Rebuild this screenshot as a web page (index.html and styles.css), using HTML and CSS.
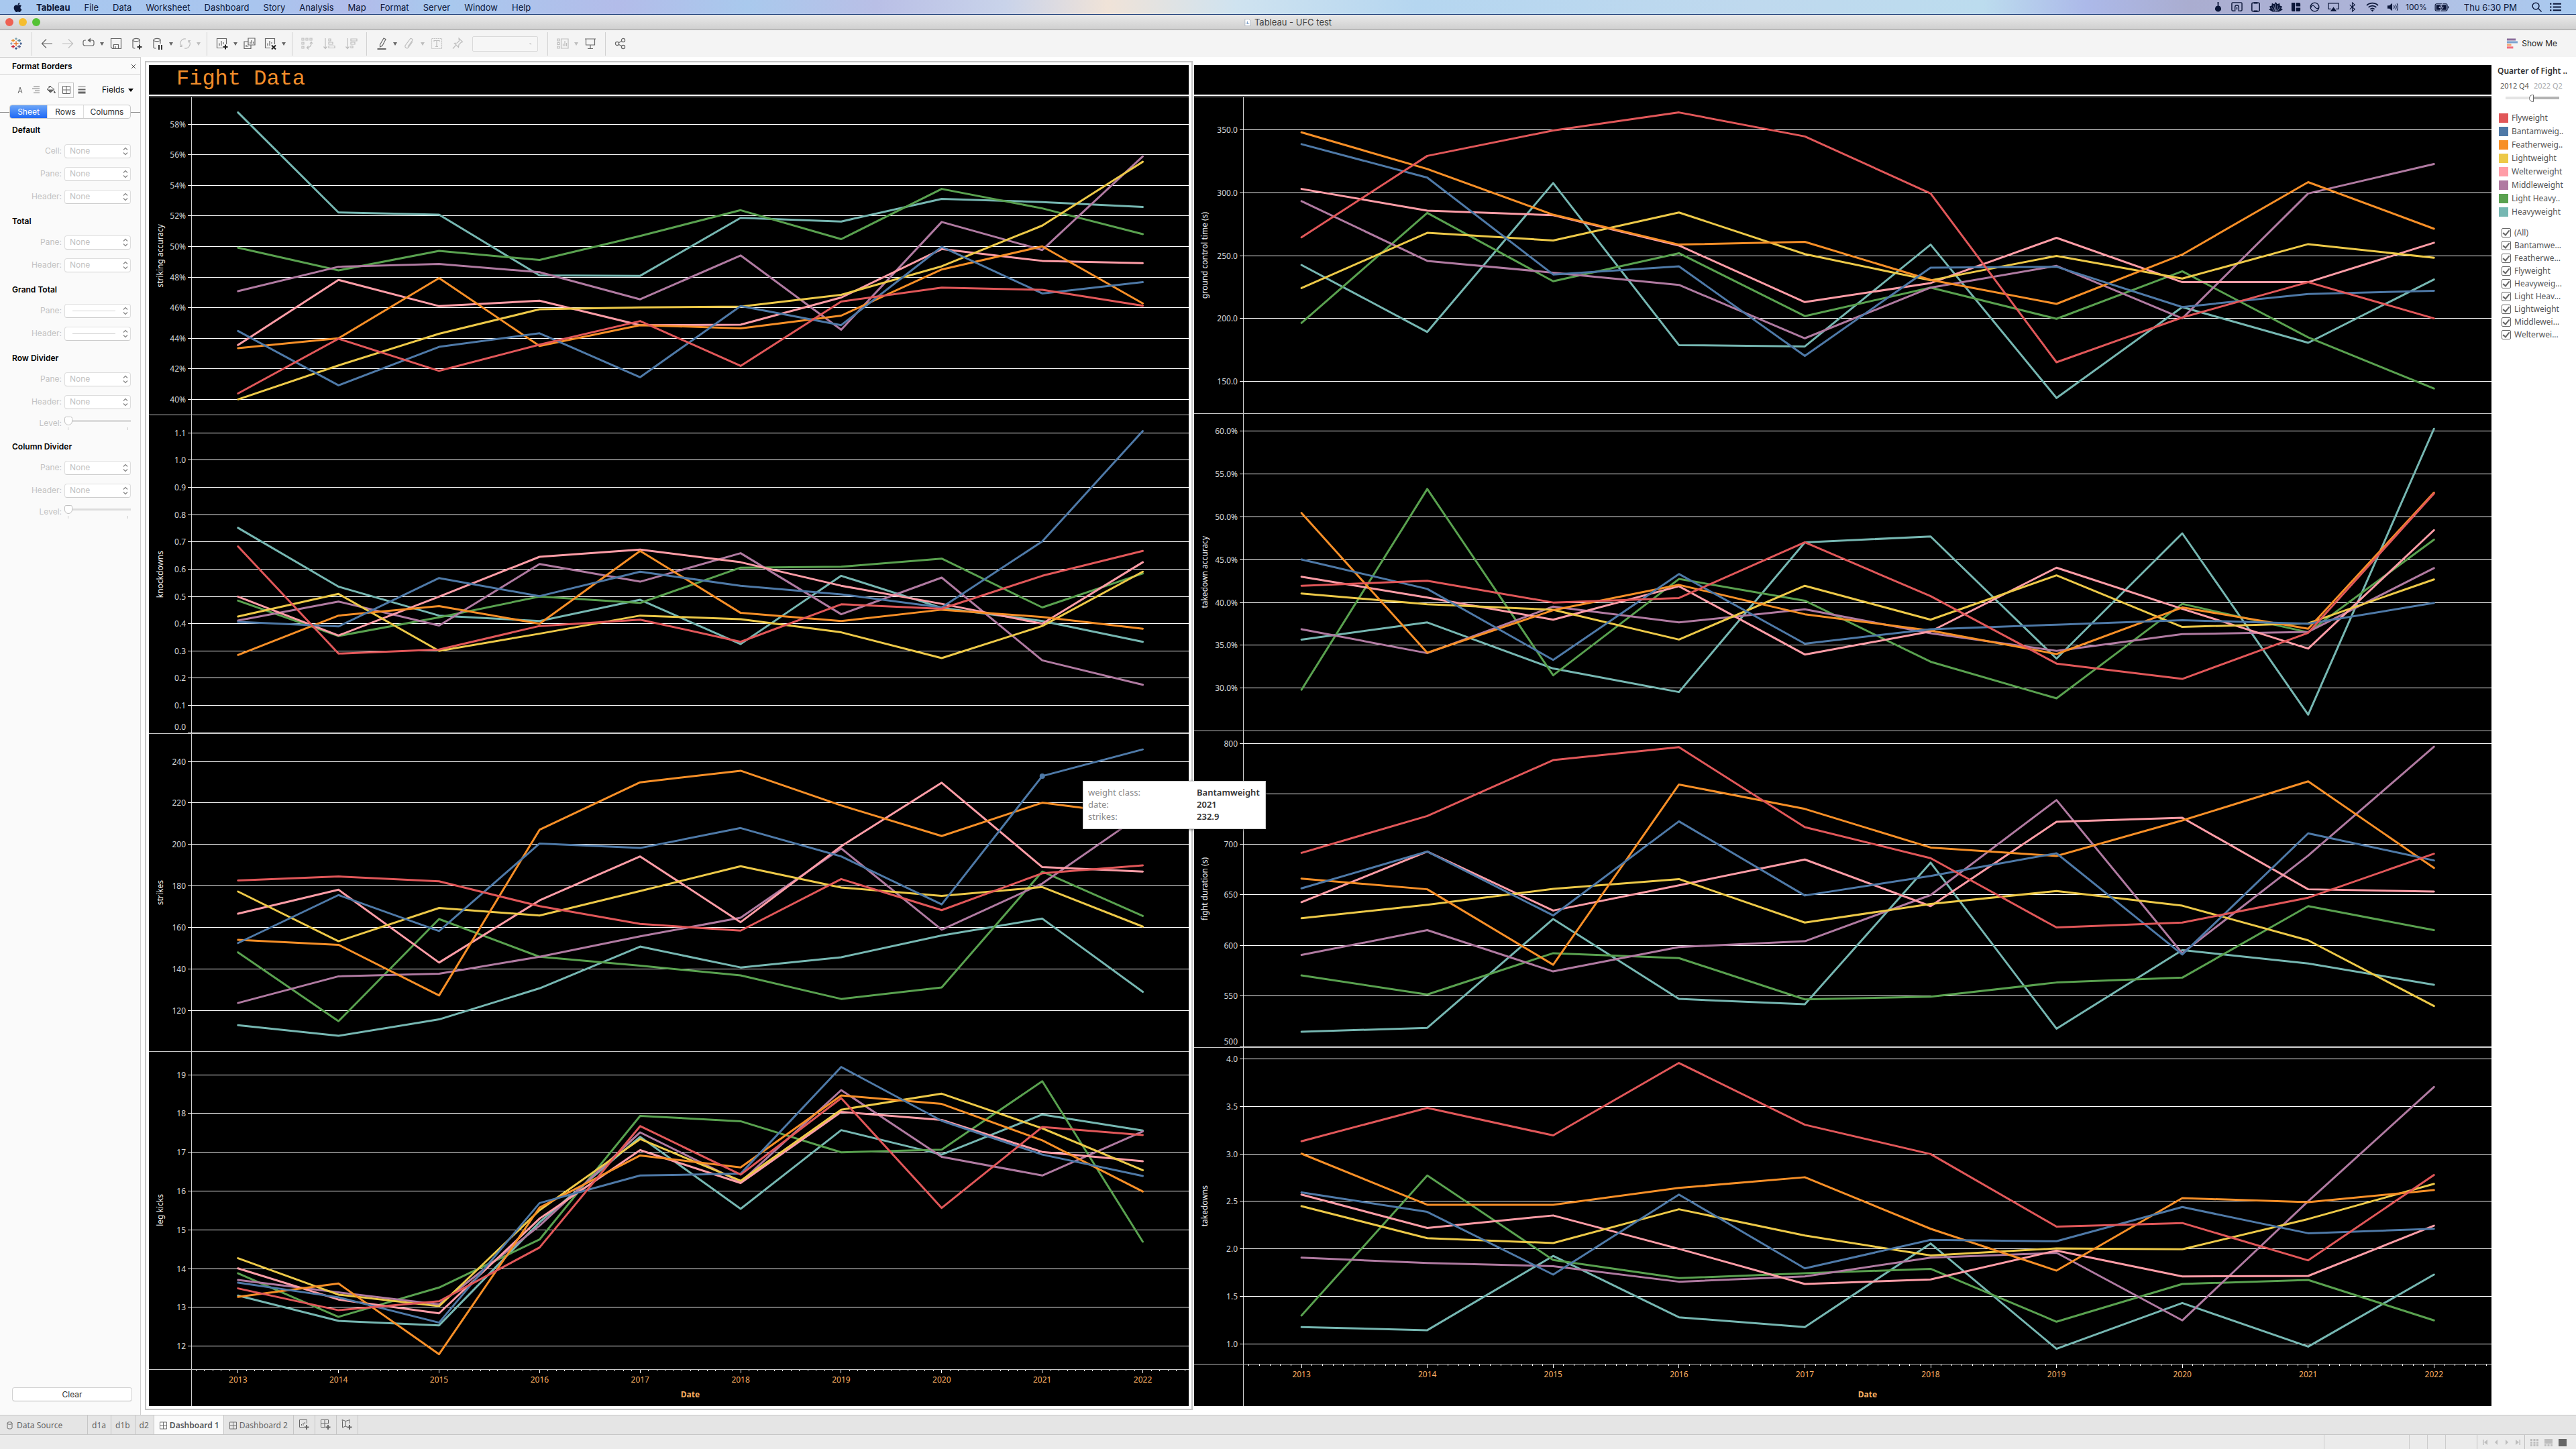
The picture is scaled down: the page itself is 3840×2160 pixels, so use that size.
FILE: index.html
```html
<!DOCTYPE html>
<html lang="en">
<head>
<meta charset="utf-8">
<title>Tableau - UFC test</title>
<link rel="stylesheet" href="styles.css">
</head>
<body>
<header class="menubar">
  <nav class="menus" aria-label="Application menu">
    <button class="apple" aria-label="Apple"><svg viewBox="0 0 384 512" width="13" height="16"><path fill="currentColor" d="M318.7 268.7c-.2-36.7 16.4-64.4 50-84.8-18.8-26.9-47.2-41.7-84.7-44.6-35.5-2.8-74.3 20.7-88.5 20.7-15 0-49.4-19.7-76.4-19.7C63.3 141.2 4 184.8 4 273.5q0 39.3 14.4 81.2c12.8 36.7 59 126.7 107.2 125.2 25.2-.6 43-17.9 75.8-17.9 31.8 0 48.3 17.9 76.4 17.9 48.6-.7 90.4-82.5 102.6-119.3-65.2-30.7-61.7-90-61.7-91.9zm-56.6-164.2c27.3-32.4 24.8-61.9 24-72.5-24.1 1.4-52 16.4-67.9 34.9-17.5 19.8-27.8 44.3-25.6 71.9 26.1 2 49.9-11.4 69.5-34.3z"/></svg></button>
    <button class="app">Tableau</button><button>File</button><button>Data</button><button>Worksheet</button><button>Dashboard</button><button>Story</button><button>Analysis</button><button>Map</button><button>Format</button><button>Server</button><button>Window</button><button>Help</button>
  </nav>
  <div class="tray">
    <svg viewBox="0 0 18 18"><path fill="currentColor" d="M8 1h2v2.500L9.800 7a4.800 4.800 0 1 1-1.600 0L8 3.500z"/></svg>
    <svg viewBox="0 0 18 18" fill="none" stroke="currentColor" stroke-width="1.500"><path d="M5 15H2.500A1.500 1.500 0 0 1 1 13.500v-10A1.500 1.500 0 0 1 2.500 2h13A1.500 1.500 0 0 1 17 3.500v10a1.500 1.500 0 0 1-1.500 1.500H13M6 16V9a3 3 0 0 1 6 0v7M9 9v4"/></svg>
    <svg viewBox="0 0 18 18" fill="none" stroke="currentColor" stroke-width="1.600"><rect x="3" y="2.500" width="12" height="13" rx="1.500"/><path d="M6 2.500h6M6 15.500h6" stroke-width="2.500"/></svg>
    <svg viewBox="0 0 22 18" class="wide"><path fill="currentColor" d="M11 1l2.500 3.500L17 3l.5 4L21 8l-1.500 3.500L22 13l-6 3.500H6L0 13l2.500-1.500L1 8l3.500-1L5 3l3.500 1.500z"/><path d="M11 4v12M7.500 6.500L10 15M14.500 6.500L12 15M4 9.500l4.500 6M18 9.500L13.500 15.500" stroke="#aeb4d4" stroke-width=".7"/></svg>
    <svg viewBox="0 0 18 18"><path fill="currentColor" d="M2 2h5.500v14H4a2 2 0 0 1-2-2zM9 2h5a2 2 0 0 1 2 2v4H9zM9 10h7v4a2 2 0 0 1-2 2H9z"/></svg>
    <svg viewBox="0 0 18 18" fill="none" stroke="currentColor" stroke-width="1.300"><circle cx="9" cy="9" r="6.800"/><path d="M2.500 11C4 6 6 5 8.500 8s4 4.500 7 2"/></svg>
    <svg viewBox="0 0 18 18"><path d="M5 12H1V3h16v9h-4" fill="none" stroke="currentColor" stroke-width="1.300"/><path fill="currentColor" d="M9 9l5 6.500H4z"/></svg>
    <svg viewBox="0 0 18 18" fill="none" stroke="currentColor" stroke-width="1.200"><path d="M5 5.500l8 7L9 16V2l4 3.500-8 7"/></svg>
    <svg viewBox="0 0 20 18" class="wide" fill="none" stroke="currentColor" stroke-width="1.900"><path d="M1 6.500a13 13 0 0 1 18 0M3.800 9.500a9 9 0 0 1 12.400 0M6.700 12.400a5 5 0 0 1 6.600 0"/><path fill="currentColor" stroke="none" d="M8 14a3 3 0 0 1 4 0l-2 2.500z"/></svg>
    <svg viewBox="0 0 18 18"><path fill="currentColor" d="M1 6.500h3L8.500 3v12L4 11.500H1z"/><path d="M11 6.500c1 1.500 1 3.500 0 5M13.500 5c1.800 2.500 1.800 5.500 0 8M16 3.500c2 3.500 2 7.500 0 11" fill="none" stroke="currentColor" stroke-width="1.100"/></svg>
    <span class="charge">100%</span>
    <svg viewBox="0 0 24 18" class="batt"><rect x="1" y="4" width="19" height="11" rx="2" fill="none" stroke="currentColor" stroke-width="1.200"/><path fill="currentColor" d="M2.500 5.500H18.500v8H2.500zM21 7.500c2 .3 2 3.700 0 4z"/><path d="M12.500 3L7 10h3.500L8.500 16 14 9h-3.500z" fill="#0b1638" stroke="#b2bddf" stroke-width="1"/></svg>
    <time class="clock">Thu 6:30 PM</time>
    <svg viewBox="0 0 18 18" fill="none" stroke="currentColor" stroke-width="1.500"><circle cx="7.500" cy="7.500" r="5.200"/><path d="M11.500 11.500l5 5"/></svg>
    <svg viewBox="0 0 18 18" fill="currentColor"><path d="M0 3h2.500v2H0zM5 3h13v2H5zM0 8h2.500v2H0zM5 8h13v2H5zM0 13h2.500v2H0zM5 13h13v2H5z"/></svg>
  </div>
</header>

<div class="titlebar">
  <div class="lights"><button class="close" aria-label="Close"></button><button class="mini" aria-label="Minimize"></button><button class="zoom" aria-label="Zoom"></button></div>
  <h1><svg viewBox="0 0 12 14" width="10" height="13"><path d="M1 1h7l3 3v9H1z" fill="#fff" stroke="#a9b2bd"/><path d="M3 10V7M5.500 10V5M8 10V8" stroke="#5b86b8"/></svg>Tableau - UFC test</h1>
</div>

<div class="toolbar">
  <button class="logo" aria-label="Start page"><svg viewBox="0 0 18 18" fill="none" stroke-width="1.500"><path stroke="#e8762d" d="M9 5.500v7M5.500 9h7"/><path stroke="#c72037" d="M4.500 11v5M2 13.500h5"/><path stroke="#5b6591" d="M13.500 11v5M11 13.500h5"/><path stroke="#eb912c" d="M4.500 2v5M2 4.500h5"/><path stroke="#59879b" d="M13.500 2v5M11 4.500h5"/><path stroke="#7199a6" stroke-width="1.200" d="M9 0v3.500M7.200 1.800h3.600"/><path stroke="#1f447e" stroke-width="1.200" d="M9 14.500V18M7.200 16.200h3.600M16 7.200v3.600M14.500 9h3.500"/><path stroke="#7b94b5" stroke-width="1.200" d="M2 7.200v3.600M0 9h3.500"/></svg></button>
  <i class="sep"></i>
  <button aria-label="Undo"><svg viewBox="0 0 18 18" stroke-width="2"><path d="M17 9H2M8 2.500L1.500 9 8 15.500"/></svg></button>
  <button class="dim" aria-label="Redo"><svg viewBox="0 0 18 18" stroke-width="1.600"><path d="M1 9h15M10 2.500L16.500 9 10 15.500"/></svg></button>
  <button aria-label="Replay"><svg viewBox="0 0 18 18"><path d="M5 4H3.500A2.500 2.500 0 0 0 1 6.500v3A2.500 2.500 0 0 0 3.500 12h11A2.500 2.500 0 0 0 17 9.500v-3A2.500 2.500 0 0 0 14.500 4H8"/><path fill="currentColor" stroke="none" d="M12 .5v7L7.500 4z"/></svg></button><button class="caret" aria-label="Replay options"></button>
  <button aria-label="Save"><svg viewBox="0 0 18 18"><path d="M1.500 1.500h15v15h-13l-2-2zM5.500 16v-5.500h7V16M8 13v3"/></svg></button>
  <button aria-label="New data source"><svg viewBox="0 0 18 18"><path d="M3 3.500v11c0 1 1.500 1.500 3.500 1.500M13 3.500V9"/><ellipse cx="8" cy="3.500" rx="5" ry="2.200"/><path stroke="#333" stroke-width="2" d="M13 10.500v7M9.500 14h7"/></svg></button>
  <button aria-label="Pause updates"><svg viewBox="0 0 18 18"><path d="M3 3.500v11c0 1 1.500 1.500 3.500 1.500M13 3.500V9"/><ellipse cx="8" cy="3.500" rx="5" ry="2.200"/><path stroke="#333" stroke-width="2" d="M11 11v7M15 11v7"/></svg></button><button class="caret" aria-label="Pause options"></button>
  <button class="dim" aria-label="Refresh"><svg viewBox="0 0 18 18"><path d="M3.500 13.500A7 7 0 0 1 10 2M14.500 4.500A7 7 0 0 1 8 16M1 13.500h3v-3M17 4.500h-3v3"/></svg></button><button class="caret dim" aria-label="Refresh options"></button>
  <i class="sep"></i>
  <button aria-label="New worksheet"><svg viewBox="0 0 18 18"><path d="M10 15.500H1.500v-14h14V10M5 12V8.500M8 12V5M11 10V7"/><path stroke="#222" stroke-width="2" d="M14 10.500v7M10.500 14h7"/></svg></button><button class="caret" aria-label="New worksheet options"></button>
  <button aria-label="Duplicate"><svg viewBox="0 0 18 18"><path d="M7 1h10v10H7zM7 6H1v10.500h10V11M10 9V6.500M12 9V4M14.500 9V6M4 14v-3M6.500 14v-2"/></svg></button>
  <button aria-label="Clear sheet"><svg viewBox="0 0 18 18"><path d="M9 15.500H1.500v-14h14V10M5 12V8.500M8 12V5M11 9V7"/><path stroke="#222" stroke-width="2" d="M11 11.500l6 6M17 11.500l-6 6"/></svg></button><button class="caret" aria-label="Clear options"></button>
  <i class="sep"></i>
  <div class="group">
  <button class="dim" aria-label="Swap"><svg viewBox="0 0 18 18"><path d="M1 1h3v3H1zM7 1h3v3H7zM13 1h3v3h-3zM1 7h3v3H1zM1 13h3v3H1zM15 7.500c.5 5-2.500 7.500-6 7.500M13 9l2-2.500L17 9M11 12.500L8.500 15l2.500 2.500"/></svg></button>
  <button class="dim" aria-label="Sort ascending"><svg viewBox="0 0 18 18"><path d="M3 1v15M.5 13.500L3 16.500l2.500-3M8 2h3v3H8zM8 7h6v3H8zM8 12.500h9v3H8z"/></svg></button>
  <button class="dim" aria-label="Sort descending"><svg viewBox="0 0 18 18"><path d="M3 1v15M.5 13.500L3 16.500l2.500-3M8 2h9v3H8zM8 7h6v3H8zM8 12.500h3v3H8z"/></svg></button>
  </div>
  <i class="sep"></i>
  <button aria-label="Highlight"><svg viewBox="0 0 18 18"><path d="M6.500 10.500L12 1l3 1.500L10 12l-3.500 2z"/><path stroke-width="2" d="M2.500 17h13"/></svg></button><button class="caret" aria-label="Highlight options"></button>
  <button class="dim" aria-label="Group"><svg viewBox="0 0 18 18"><path d="M14 6l-6.500 9a2.800 2.800 0 0 1-4.500-3L10 2.500a2 2 0 0 1 3.500 2L7 13.500"/></svg></button><button class="caret dim" aria-label="Group options"></button>
  <button class="dim" aria-label="Show labels"><svg viewBox="0 0 18 18"><path stroke-dasharray="2 1" d="M1.500 1.500h15v15h-15z"/><path d="M5 6V4.500h8V6M9 4.500v9M7 13.500h4"/></svg></button>
  <button class="dim" aria-label="Fix axes"><svg viewBox="0 0 18 18"><path d="M11 1l5.500 5.500-2.500 1-3 3-.5 4-6-6 4-.5 3-3zM6.500 11.500L2 16.500"/></svg></button>
  <select class="fit" aria-label="Fit" disabled><option></option></select>
  <i class="sep"></i>
  <button class="dim" aria-label="Show cards"><svg viewBox="0 0 18 18"><path d="M1 2h3v3H1zM1 7.500h3v3H1zM1 13h3v3H1zM6.500 2H17v14H6.500zM9.500 13V9M12 13V5M14.500 13V8"/></svg></button><button class="caret dim" aria-label="Card options"></button>
  <button aria-label="Presentation mode"><svg viewBox="0 0 18 18"><path d="M1 2h16M2.500 2v9h13V2M9 11v5.500M5 16.500h8"/></svg></button>
  <i class="sep"></i>
  <button aria-label="Share"><svg viewBox="0 0 18 18"><circle cx="4" cy="9" r="2.600"/><circle cx="13" cy="4" r="2.600"/><circle cx="13" cy="14" r="2.600"/><path d="M6.300 7.800l4.400-2.500M6.300 10.200l4.400 2.500"/></svg></button>
  <button class="showme"><svg viewBox="0 0 18 16"><path fill="#8a6d9b" d="M1 0h14v3.200H1z"/><path fill="#7ba3d0" d="M1 4.200h17v3.200H1z"/><path fill="#f5a773" d="M1 8.400h7v3.200H1z"/><path fill="#f26d7d" d="M1 12.600h10v3.200H1z"/></svg>Show Me</button>
</div>

<main class="workspace">
  <aside class="format">
    <div class="format-head"><h2>Format Borders</h2><button aria-label="Close pane"><svg viewBox="0 0 10 10" width="8" height="8"><path d="M1 1l8 8M9 1l-8 8" stroke="#555" stroke-width="1.200"/></svg></button></div>
    <div class="format-kinds">
      <button aria-label="Font"><svg viewBox="0 0 16 16"><path d="M5 13L8 4l3 9M6 10h4"/></svg></button>
      <button aria-label="Alignment"><svg viewBox="0 0 16 16"><path d="M5 3.500h9M3 6.500h11M7 9.500h7M5 12.500h9"/></svg></button>
      <button aria-label="Shading"><svg viewBox="0 0 16 16"><path d="M2 7l5-4 6 4-6 5z"/><path fill="#666" d="M3 8h9l-5 4zM13 9.500l1.500 3h-2z"/><path d="M5 5V2.500h3"/></svg></button>
      <button class="on" aria-label="Borders"><svg viewBox="0 0 16 16"><path d="M2.500 2.500h11v11h-11zM8 2.500v11M2.500 8h11"/></svg></button>
      <button aria-label="Lines"><svg viewBox="0 0 16 16"><path stroke-width="1" d="M2.500 3.500h11"/><path stroke-width="2" d="M2.500 7.500h11"/><path stroke-width="3" d="M2.500 12h11"/></svg></button>
      <button class="fields">Fields<i></i></button>
    </div>
    <div class="scope"><div class="segments"><button class="on">Sheet</button><button>Rows</button><button>Columns</button></div></div>
    <form class="borders" id="borders"></form>
    <button class="clear">Clear</button>
  </aside>

  <section class="canvas">
    <div class="frame">
      <article class="sheet left">
        <h2>Fight Data</h2>
        <div class="chart" id="chart-left"></div>
      </article>
    </div>
    <article class="sheet right">
      <h2></h2>
      <div class="chart" id="chart-right"></div>
    </article>
    <dl class="tooltip" role="tooltip">
      <dt>weight class:</dt><dd>Bantamweight</dd>
      <dt>date:</dt><dd>2021</dd>
      <dt>strikes:</dt><dd>232.9</dd>
    </dl>
  </section>

  <aside class="filters">
    <h3><label for="quarter">Quarter of Fight ..</label></h3>
    <div class="range"><span>2012 Q4</span><span>2022 Q2</span></div>
    <input type="range" id="quarter" min="0" max="100" value="48">
    <ul class="legend">
      <li><i class="fly"></i>Flyweight</li>
      <li><i class="bantam"></i>Bantamweig..</li>
      <li><i class="feather"></i>Featherweig..</li>
      <li><i class="light"></i>Lightweight</li>
      <li><i class="welter"></i>Welterweight</li>
      <li><i class="middle"></i>Middleweight</li>
      <li><i class="lightheavy"></i>Light Heavy..</li>
      <li><i class="heavy"></i>Heavyweight</li>
    </ul>
    <div class="checks">
      <label><input type="checkbox" checked>(All)</label>
      <label><input type="checkbox" checked>Bantamwe...</label>
      <label><input type="checkbox" checked>Featherwe...</label>
      <label><input type="checkbox" checked>Flyweight</label>
      <label><input type="checkbox" checked>Heavyweig...</label>
      <label><input type="checkbox" checked>Light Heav...</label>
      <label><input type="checkbox" checked>Lightweight</label>
      <label><input type="checkbox" checked>Middlewei...</label>
      <label><input type="checkbox" checked>Welterwei...</label>
    </div>
  </aside>
</main>

<nav class="tabs" aria-label="Sheets">
  <button class="source"><svg viewBox="0 0 9 12" class="cyl"><path d="M1 2.500v7c0 2 7 2 7 0v-7"/><ellipse cx="4.500" cy="2.500" rx="3.500" ry="1.800"/></svg>Data Source</button>
  <button>d1a</button><button>d1b</button><button>d2</button>
  <button class="dash on"><svg viewBox="0 0 12 12"><path d="M.5.5h11v11H.5zM6 .5v11M.5 6h11"/></svg>Dashboard 1</button>
  <button class="dash"><svg viewBox="0 0 12 12"><path d="M.5.5h11v11H.5zM6 .5v11M.5 6h11"/></svg>Dashboard 2</button>
  <button class="new" aria-label="New worksheet"><svg viewBox="0 0 16 16"><path d="M8 11.500H1.500v-11h11V6M4.500 9V7M7 9V5M9.500 7V4"/><path stroke-width="2" d="M12 8v7M8.500 11.500h7"/></svg></button>
  <button class="new" aria-label="New dashboard"><svg viewBox="0 0 16 16"><path d="M8 11.500H1.500v-11h11V6M7 .5v11M1.500 6h11"/><path stroke-width="2" d="M12 8v7M8.500 11.500h7"/></svg></button>
  <button class="new" aria-label="New story"><svg viewBox="0 0 16 16"><path d="M8 11L6 10l-4.500 2V2.500L1 .5l5.500 2L12.500.5V6M6.500 2.500V10"/><path stroke-width="2" d="M12 8v7M8.500 11.500h7"/></svg></button>
</nav>
<footer class="status">
  <span class="w1"></span><span class="w2"></span><span class="w2"></span><span class="w3"></span>
  <div class="pager">
    <button aria-label="First"><svg viewBox="0 0 10 10"><path d="M1 1h1.500v8H1zM8 1v8L3 5z"/></svg></button>
    <button aria-label="Previous"><svg viewBox="0 0 10 10"><path d="M7 1v8L3 5z"/></svg></button>
    <button aria-label="Next"><svg viewBox="0 0 10 10"><path d="M3 1v8l4-4z"/></svg></button>
    <button aria-label="Last"><svg viewBox="0 0 10 10"><path d="M7.500 1H9v8H7.500zM2 1v8l5-4z"/></svg></button>
  </div>
  <div class="views">
    <button aria-label="Sheet sorter"><svg viewBox="0 0 12 12"><path d="M0 1h3v3H0zM4.500 1h3v3h-3zM9 1h3v3H9zM0 5h3v3H0zM4.500 5h3v3h-3zM9 5h3v3H9zM0 9h3v3H0zM4.500 9h3v3h-3zM9 9h3v3H9z"/></svg></button>
    <button aria-label="Filmstrip"><svg viewBox="0 0 12 12"><path d="M0 1h12v7H0zM0 9h3v3H0zM4.500 9h3v3h-3zM9 9h3v3H9z"/></svg></button>
    <button class="on" aria-label="Tabs"><svg viewBox="0 0 12 12"><path d="M0 1h12v11H0z"/></svg></button>
  </div>
</footer>
<script src="charts.js"></script>
</body>
</html>
```
FILE: styles.css
```css
* { box-sizing: border-box; }
body, h1, h2, h3, ul, dl, dd { margin: 0; padding: 0; }
body {
  display: flex;
  flex-direction: column;
  min-height: 100vh;
  font: 12px/16px "Noto Sans", "Open Sans", sans-serif;
  color: #333;
  background: #fff;
}
button { margin: 0; padding: 0; border: 0; background: none; color: inherit; font: inherit; }
svg { display: block; flex: none; }
ul { list-style: none; }

/* system menu bar */
.menubar {
  display: flex;
  justify-content: space-between;
  align-items: center;
  height: 22px;
  padding: 0 22px 0 20px;
  font: 13px/20px Inter, Roboto, sans-serif;
  color: #0b1638;
  border-bottom: 1px solid #23437c;
  background: linear-gradient(90deg, #a8c8ef 0, #a9c5ee 10%, #b2bcea 14%, #a8c9ee 17%, #b3bce9 24%, #a9c9ed 29%, #b9bfe6 34%, #c9d3ea 39%, #f0e3d8 43%, #cfe3f0 48%, #b5d6f0 55%, #bfd9ee 68%, #bcdcee 77%, #acb9e9 81%, #aaadd0 85%, #adb4d8 92%, #b0c2e6 95%, #a9caf0 100%);
}
.menus { display: flex; align-items: center; gap: 21px; }
.menus .app { font-weight: 700; }
.tray { display: flex; align-items: center; gap: 11px; }
.tray svg { width: 17px; height: 17px; }
.tray .wide { width: 21px; }
.tray .batt { width: 23px; }
.tray .charge { font-size: 12px; }
.tray .clock { margin: 0 10px; }

.titlebar {
  position: relative;
  display: flex;
  align-items: center;
  justify-content: center;
  height: 23px;
  background: linear-gradient(#e9e9e9, #cfcfcf);
  border-bottom: 1px solid #9f9f9f;
}
.titlebar h1 { display: flex; align-items: center; gap: 5px; font: 13px/20px Inter, sans-serif; color: #444; }
.lights { position: absolute; left: 8px; display: flex; gap: 8px; }
.lights button { width: 12px; height: 12px; border-radius: 50%; }
.close { background: #ee6152; }
.mini { background: #f5bd2f; }
.zoom { background: #55c234; }

.toolbar { display: flex; align-items: center; height: 40px; background: #f4f4f4; color: #666; }
.toolbar button { width: 31px; height: 28px; display: flex; align-items: center; justify-content: center; }
.toolbar svg { width: 18px; height: 18px; fill: none; stroke: currentColor; stroke-width: 1.2; }
.toolbar .logo { width: 47px; }
.toolbar .logo svg { stroke: none; stroke-width: 1.5; }
.toolbar .dim { color: #bdbdbd; }
.toolbar .caret { width: 10px; }
.caret::before { content: ""; border: 3px solid transparent; border-top: 5px solid currentColor; border-bottom: 0; }
.sep { width: 1px; height: 35px; margin: 0 6px 0 7px; background: #d2d2d2; }
.toolbar .logo + .sep { margin-left: 0; }
.group { display: flex; gap: 2px; }
.fit {
  appearance: none;
  width: 98px;
  height: 23px;
  margin: 0 7px;
  border: 1px solid #d0d0d0;
  border-radius: 2px;
  background: linear-gradient(45deg, transparent 50%, #ccc 50%) no-repeat 84px 9px / 3px 5px, #f8f8f8;
}
.toolbar .showme { width: auto; gap: 6px; margin-left: auto; margin-right: 28px; font: 12px/16px Inter, sans-serif; color: #222; }
.toolbar .showme svg { width: 17px; height: 16px; stroke: none; }

.workspace { flex: 1; display: flex; min-height: 0; }

/* format pane */
.format {
  display: flex;
  flex-direction: column;
  width: 210px;
  border: 1px solid #d0d0d0;
  border-width: 1px 1px 0 0;
  background: #fafafa;
  font: 12px/16px Inter, sans-serif;
  color: #333;
}
.format-head { display: flex; justify-content: space-between; align-items: center; height: 26px; padding: 0 6px 0 18px; border-bottom: 1px solid #d5d5d5; }
.format h2, .format legend { font-size: 12px; line-height: 16px; font-weight: 600; color: #000; }
.format-kinds { display: flex; align-items: center; height: 44px; padding-left: 18px; }
.format-kinds button { display: grid; place-items: center; width: 23px; height: 23px; }
.format-kinds .on { border: 1px solid #c4c4c4; }
.format-kinds svg { width: 16px; height: 16px; fill: none; stroke: #666; stroke-width: 1; }
.format-kinds .fields { display: flex; align-items: center; gap: 5px; width: auto; margin-left: 19px; color: #000; }
.fields i { border: 4px solid transparent; border-top: 5px solid #000; border-bottom: 0; }
.scope { display: flex; align-items: center; height: 21px; padding: 0 14px; background: linear-gradient(#8f8f8f, #8f8f8f) no-repeat 0 11px / 100% 1px; }
.segments { display: grid; grid-template-columns: 55px 54px 1fr; width: 100%; height: 21px; border: 1px solid #c9c9c9; border-radius: 4px; background: #fff; overflow: hidden; }
.segments button + button { border-left: 1px solid #ddd; }
.segments .on { color: #fff; background: linear-gradient(#6ba5f8, #2069f5); }
.borders { padding-top: 3px; }
.borders fieldset { margin: 0 0 6px; padding: 0; border: 0; min-width: 0; }
.borders legend { height: 28px; padding: 6px 0 6px 18px; }
.row { display: grid; grid-template-columns: 92px 99px; column-gap: 4px; align-items: center; height: 34px; color: #c2c2c2; }
.row > label { text-align: right; }
.row.level { height: 30px; }
.pick { position: relative; display: block; }
.pick select {
  appearance: none;
  width: 100%;
  height: 21px;
  padding: 0 7px;
  border: 1px solid #dedede;
  border-bottom-color: #cdcdcd;
  border-radius: 4px;
  background: #fff;
  color: #c2c2c2;
  font: inherit;
  opacity: 1;
}
.pick svg { position: absolute; right: 4px; top: 4px; width: 8px; height: 13px; fill: none; stroke: #8e8e8e; stroke-width: 1.4; }
.pick hr { position: absolute; left: 12px; top: 10px; width: 64px; margin: 0; border: 0; border-top: 1px solid #d4d4d4; }
.row input { appearance: none; width: 99px; height: 20px; margin: 0; background: linear-gradient(#dcdcdc, #dcdcdc) no-repeat 0 5px / 100% 3px, linear-gradient(#ccc, #ccc) no-repeat 5px 16px / 1px 4px, linear-gradient(#ccc, #ccc) no-repeat 94px 16px / 1px 4px; }
.row input::-webkit-slider-thumb { appearance: none; width: 12px; height: 13px; margin-top: -7px; background: #fff; border: 1px solid #c0c0c0; border-radius: 3px 3px 7px 7px; }
.clear { width: 179px; height: 21px; margin: auto 0 20px 18px; background: #fff; border: 1px solid #d2d2d2; border-bottom-color: #b5b5b5; border-radius: 4px; }

/* dashboard */
.canvas { position: relative; flex: 1; display: grid; grid-template-columns: 1562fr 1934fr; column-gap: 2px; padding: 6px 0 7px 6px; min-width: 0; }
.frame { display: flex; padding: 4px; border: 2px solid #c4c4c4; min-width: 0; }
.sheet { flex: 1; display: flex; flex-direction: column; background: #000; min-width: 0; }
.sheet.right { margin: 6px 0; }
.sheet h2 { height: 46px; padding-left: 41px; border-bottom: 2px solid #fff; color: #f28e2b; font: 32px/42px "Liberation Mono", monospace; }
.chart { flex: 1; display: flex; flex-direction: column; margin-top: 1px; border-top: 1px solid #d0d0d0; color: #d6d6d6; }
.pane { flex: 1 1 0; display: flex; border-bottom: 1px solid #c8c8c8; }
.axis-title { display: grid; place-items: center; width: 63px; padding-right: 29px; }
.right .axis-title { width: 73px; padding-right: 41px; }
.axis-title span { writing-mode: vertical-rl; transform: rotate(180deg); color: #f0f0f0; white-space: nowrap; }
.plot { position: relative; flex: 1; border-left: 1px solid #d0d0d0; }
.plot > svg { position: absolute; inset: 0; width: 100%; height: 100%; overflow: visible; }
.plot text { fill: currentColor; text-anchor: end; dominant-baseline: central; }
.grid { stroke: #fff; stroke-width: 1; shape-rendering: crispEdges; }
.line { fill: none; stroke: currentColor; stroke-width: 3; stroke-linejoin: round; stroke-linecap: round; vector-effect: non-scaling-stroke; }
.dates { display: flex; height: 54px; }
.right .dates { height: 62px; }
.dates .plot { margin-left: 63px; }
.right .dates .plot { margin-left: 73px; }
.dates text { fill: #f9ae62; text-anchor: middle; }
.dates .name { position: absolute; left: 0; right: 0; bottom: 9px; text-align: center; font-weight: 700; color: #f9ae62; }

.fly { color: #e15759; }
.bantam { color: #4e79a7; }
.feather { color: #f78f27; }
.light { color: #edc948; }
.welter { color: #ff9da7; }
.middle { color: #b07aa1; }
.lightheavy { color: #59a14f; }
.heavy { color: #76b7b2; }

.tooltip {
  position: absolute;
  left: 40.07%;
  top: 53.3%;
  display: grid;
  grid-template-columns: 162px auto;
  width: 273px;
  padding: 7px 8px 9px 7px;
  border: 1px solid #ccc;
  background: #fff;
  box-shadow: 0 1px 4px #0008;
  font-size: 13px;
  line-height: 18px;
}
.tooltip dt { color: #888; }
.tooltip dd { font-weight: 600; color: #333; }

/* filters */
.filters { width: 126px; padding: 13px 6px 0 9px; color: #555; white-space: nowrap; overflow: hidden; }
.filters h3 { font-size: 12px; line-height: 16px; font-weight: 600; color: #333; }
.range { display: flex; gap: 7px; margin: 6px 0 4px 4px; font-size: 11px; }
.range span + span { color: #aaa; }
.filters input[type="range"] { appearance: none; display: block; width: 80px; height: 12px; margin: 0 0 0 12px; background: linear-gradient(90deg, #e4e4e4 50%, #b3b3b3 50%) no-repeat 0 4px / 100% 4px; }
.filters input[type="range"]::-webkit-slider-thumb { appearance: none; width: 7px; height: 11px; border: 1px solid #666; border-radius: 6px 0 0 6px; background: #fff; }
.legend { margin-top: 14px; }
.legend li { display: flex; align-items: center; gap: 5px; height: 20px; padding-left: 2px; }
.legend i { width: 14px; height: 14px; background: currentColor; }
.checks { margin-top: 11px; }
.checks label { display: flex; align-items: center; gap: 5px; height: 19px; padding-left: 6px; }
.checks input { appearance: none; display: grid; place-items: center; width: 14px; height: 14px; margin: 0; border: 1px solid #666; border-radius: 2px; background: #fff; }
.checks input:checked::before { content: ""; width: 4px; height: 8px; margin-top: -2px; border: solid #666; border-width: 0 2px 2px 0; transform: rotate(40deg); }

/* sheet tabs and status */
.tabs { display: flex; height: 30px; border-top: 1px solid #c6c6c6; border-bottom: 1px solid #c6c6c6; background: #e5e5e5; color: #666; }
.tabs button { display: flex; align-items: center; gap: 6px; padding: 2px 7px 0 6px; border-right: 1px solid #c6c6c6; }
.tabs .source { width: 131px; padding-left: 10px; }
.tabs .dash { width: 104px; padding-left: 8px; gap: 4px; white-space: nowrap; }
.tabs .on { background: #fafafa; color: #555; font-weight: 600; }
.tabs svg { width: 11px; height: 12px; fill: none; stroke: #666; stroke-width: 1; }
.tabs .cyl { width: 9px; }
.tabs .new { width: 32px; padding: 0; justify-content: center; }
.tabs .new svg { width: 16px; height: 16px; }
.status { display: flex; justify-content: flex-end; height: 21px; background: #ebebeb; }
.status > span { border-left: 1px solid #ccc; }
.w1 { width: 127px; }
.w2 { width: 27px; }
.w3 { width: 47px; }
.pager, .views { display: flex; align-items: center; border-left: 1px solid #c2c2c2; }
.pager { width: 71px; padding-left: 7px; gap: 6px; }
.views { width: 77px; padding-left: 8px; gap: 9px; }
.status svg { width: 10px; height: 10px; fill: #bdbdbd; }
.views svg { width: 12px; height: 12px; }
.views .on svg { fill: #666; }
```
FILE: charts.js
```js
// Series order runs back to front, so flyweight is painted last.
const CLASSES = ["heavy", "lightheavy", "middle", "welter", "light", "feather", "bantam", "fly"];
const FIRST_X = 46.3, STEP_X = 100.85, WIDTH = 1000;

// Each pane: vertical extent [top, bottom], tick labels with the first and last tick row,
// and one row of yearly positions (2013 to 2022) per class.
const LEFT = [
  { title: "striking accuracy", extent: [80.5, 782], ticks: ["58%", "56%", "54%", "52%", "50%", "48%", "46%", "44%", "42%", "40%"], span: [140, 748], rows: [
    [114,335,340,474,475,347,355,305,312,323],
    [413,463,420,440,387,330,394,283,326,383],
    [509,455,449,467,527,430,594,356,418,211],
    [628,484,542,530,584,583,523,416,442,447],
    [748,673,603,549,545,543,517,454,364,223],
    [635,613,480,630,584,591,563,461,410,536],
    [597,717,632,602,699,542,584,411,514,489],
    [735,614,685,627,575,674,532,501,506,541]] },
  { title: "knockdowns", extent: [782, 1484], ticks: ["1.1", "1.0", "0.9", "0.8", "0.7", "0.6", "0.5", "0.4", "0.3", "0.2", "0.1", "0.0"], span: [821, 1484], rows: [
    [1031,1161,1225,1237,1190,1288,1137,1208,1237,1283],
    [1192,1270,1229,1183,1197,1119,1117,1099,1207,1132],
    [1236,1194,1247,1111,1150,1087,1222,1141,1324,1378],
    [1183,1269,1183,1095,1079,1107,1159,1199,1243,1107],
    [1227,1177,1303,1265,1225,1233,1262,1319,1248,1128],
    [1312,1225,1204,1243,1082,1219,1237,1212,1228,1254],
    [1239,1249,1142,1182,1128,1159,1178,1207,1061,817],
    [1072,1309,1300,1248,1234,1283,1200,1210,1137,1082]] },
  { title: "strikes", extent: [20, 735], ticks: ["240", "220", "200", "180", "160", "140", "120"], span: [82, 643], marker: [8, 115, "bantam"], rows: [
    [676,700,663,593,499,546,523,474,436,601],
    [512,667,437,522,542,564,617,591,330,430],
    [626,566,560,522,476,434,278,461,357,200],
    [425,371,535,395,296,444,273,130,320,330],
    [375,487,412,429,374,318,366,385,365,454],
    [484,495,609,236,129,103,181,250,175,204],
    [491,383,464,267,277,232,296,404,115,55],
    [350,341,352,408,448,463,347,417,334,316]] },
  { title: "leg kicks", extent: [735, 1449], ticks: ["19", "18", "17", "16", "15", "14", "13", "12"], span: [786.5, 1397], rows: [
    [1283,1340,1350,1118,926,1088,911,966,876,912],
    [1233,1331,1265,1157,879,891,961,955,801,1162],
    [1248,1276,1303,1126,916,1028,821,971,1013,914],
    [1222,1292,1323,1110,956,1030,870,888,960,981],
    [1199,1281,1307,1091,931,1025,865,829,907,1001],
    [1286,1256,1415,1085,968,995,833,852,934,1049],
    [1254,1287,1344,1075,1013,1009,769,890,966,1014],
    [1267,1316,1296,1175,902,1011,839,1086,904,922]] }
];

const RIGHT = [
  { title: "ground control time (s)", extent: [80.5, 779], ticks: ["350.0", "300.0", "250.0", "200.0", "150.0"], span: [153, 708], rows: [
    [451,599,270,628,631,406,745,544,623,483],
    [579,336,487,425,564,501,570,465,611,724],
    [310,442,468,495,613,501,453,569,293,228],
    [283,331,341,408,533,491,391,489,489,402],
    [502,380,397,335,427,485,431,481,405,435],
    [158,239,340,406,400,484,537,428,268,371],
    [184,258,472,454,652,457,455,544,515,508],
    [390,210,154,114,167,293,666,567,489,569]] },
  { title: "takedown accuracy", extent: [779, 1478], ticks: ["60.0%", "55.0%", "50.0%", "45.0%", "40.0%", "35.0%", "30.0%"], span: [817.5, 1385], rows: [
    [1278,1240,1342,1394,1063,1050,1320,1043,1444,812],
    [1389,945,1357,1144,1192,1327,1408,1199,1262,1057],
    [1255,1308,1205,1240,1211,1264,1303,1266,1261,1120],
    [1139,1185,1234,1160,1311,1260,1119,1210,1298,1036],
    [1176,1200,1212,1278,1159,1234,1136,1250,1242,1145],
    [998,1307,1213,1157,1222,1258,1310,1207,1254,953],
    [1101,1166,1323,1133,1287,1255,1245,1235,1243,1197],
    [1159,1148,1196,1186,1063,1182,1331,1365,1263,955]] },
  { title: "fight duration (s)", extent: [14, 726], ticks: ["800", "", "700", "650", "600", "550", "500"], span: [41.5, 723.5], rows: [
    [691,682,437,617,629,310,684,507,537,585],
    [564,607,514,525,618,612,580,569,408,462],
    [518,462,555,500,487,383,169,514,294,49],
    [399,285,418,361,303,408,218,209,370,375],
    [435,405,369,347,445,403,374,407,485,633],
    [346,370,540,134,189,276,295,215,127,322],
    [368,285,429,217,384,340,289,517,244,305],
    [288,205,79,50,230,300,456,445,389,290]] },
  { title: "takedowns", extent: [726, 1437], ticks: ["4.0", "3.5", "3.0", "2.5", "2.0", "1.5", "1.0"], span: [751, 1392], rows: [
    [1354,1361,1194,1332,1354,1166,1403,1300,1398,1236],
    [1328,1013,1203,1244,1233,1223,1342,1257,1248,1339],
    [1198,1210,1217,1252,1240,1198,1187,1339,1071,814],
    [1056,1131,1103,1178,1257,1247,1182,1240,1239,1126],
    [1082,1154,1165,1089,1148,1193,1177,1179,1111,1032],
    [964,1079,1079,1041,1017,1133,1227,1064,1073,1046],
    [1051,1095,1236,1056,1222,1158,1161,1084,1143,1133],
    [936,861,923,760,899,965,1128,1120,1204,1012]] }
];

const xOf = i => FIRST_X + STEP_X * i;
const pct = n => n.toFixed(3) + "%";

function paneHtml(pane) {
  const [top, bottom] = pane.extent, height = bottom - top;
  const [first, last] = pane.span;
  const yPct = y => pct((y - top) / height * 100);
  const ticks = pane.ticks.map((label, i) => {
    const y = first + (last - first) * i / (pane.ticks.length - 1);
    // a label that would cross the pane's lower edge is lifted clear of it
    const labelY = Math.min(y, bottom - 13);
    return `<line class="grid" x1="-6" x2="100%" y1="${yPct(y)}" y2="${yPct(y)}"/><text x="-9" y="${yPct(labelY)}">${label}</text>`;
  }).join("");
  const lines = pane.rows.map((row, k) =>
    `<polyline class="line ${CLASSES[k]}" points="${row.map((y, i) => xOf(i).toFixed(1) + "," + y).join(" ")}"/>`).join("");
  const marker = pane.marker
    ? `<circle class="${pane.marker[2]}" fill="currentColor" r="4" cx="${pct(xOf(pane.marker[0]) / 10)}" cy="${yPct(pane.marker[1])}"/>` : "";
  return `<div class="pane"><div class="axis-title"><span>${pane.title}</span></div><div class="plot"><svg>${ticks}<svg viewBox="0 ${top} ${WIDTH} ${height}" preserveAspectRatio="none" width="100%" height="100%">${lines}</svg>${marker}</svg></div></div>`;
}

function datesHtml() {
  let marks = "";
  for (let m = -5; m <= 113; m++) {
    const x = pct((FIRST_X + STEP_X * m / 12) / 10);
    marks += `<line class="grid" x1="${x}" x2="${x}" y1="0" y2="${m % 12 === 0 ? 5 : 2}"/>`;
  }
  for (let i = 0; i < 10; i++) marks += `<text x="${pct(xOf(i) / 10)}" y="14">${2013 + i}</text>`;
  return `<div class="dates"><div class="plot"><svg>${marks}</svg><span class="name">Date</span></div></div>`;
}

document.getElementById("chart-left").innerHTML = LEFT.map(paneHtml).join("") + datesHtml();
document.getElementById("chart-right").innerHTML = RIGHT.map(paneHtml).join("") + datesHtml();

// Border settings, grouped by what they apply to.
const SECTIONS = [
  ["Default", ["Cell", "Pane", "Header"]],
  ["Total", ["Pane", "Header"]],
  ["Grand Total", ["Pane", "Header"], "line"],
  ["Row Divider", ["Pane", "Header", "Level"]],
  ["Column Divider", ["Pane", "Header", "Level"]]
];
document.getElementById("borders").innerHTML = SECTIONS.map(([name, fields, style]) => {
  const rows = fields.map(field => {
    const id = (name + "-" + field).toLowerCase().replace(" ", "-");
    if (field === "Level") return `<div class="row level"><label for="${id}">Level:</label><input type="range" id="${id}" min="0" max="1" value="0" disabled></div>`;
    const option = style ? "<option></option>" : "<option>None</option>";
    return `<div class="row"><label for="${id}">${field}:</label><span class="pick"><select id="${id}" disabled>${option}</select>${style ? "<hr>" : ""}<svg viewBox="0 0 8 13"><path d="M1 4.500L4 1.500l3 3M1 8.500l3 3 3-3"/></svg></span></div>`;
  }).join("");
  return `<fieldset><legend>${name}</legend>${rows}</fieldset>`;
}).join("");
```
